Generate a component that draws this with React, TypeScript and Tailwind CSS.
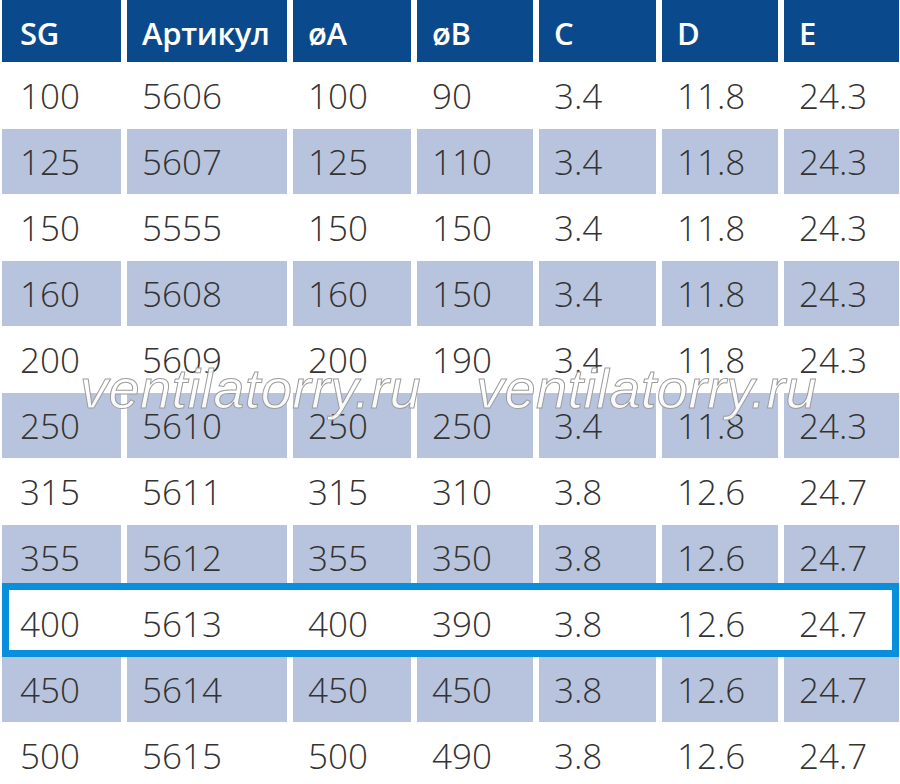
import React from 'react';

const headers = ['SG', 'Артикул', 'øA', 'øB', 'C', 'D', 'E'];

const rows: string[][] = [
  ['100', '5606', '100', '90', '3.4', '11.8', '24.3'],
  ['125', '5607', '125', '110', '3.4', '11.8', '24.3'],
  ['150', '5555', '150', '150', '3.4', '11.8', '24.3'],
  ['160', '5608', '160', '150', '3.4', '11.8', '24.3'],
  ['200', '5609', '200', '190', '3.4', '11.8', '24.3'],
  ['250', '5610', '250', '250', '3.4', '11.8', '24.3'],
  ['315', '5611', '315', '310', '3.8', '12.6', '24.7'],
  ['355', '5612', '355', '350', '3.8', '12.6', '24.7'],
  ['400', '5613', '400', '390', '3.8', '12.6', '24.7'],
  ['450', '5614', '450', '450', '3.8', '12.6', '24.7'],
  ['500', '5615', '500', '490', '3.8', '12.6', '24.7'],
];

// column widths, left padding of the text
const cols = [
  'w-[119px] pl-[18px]',
  'w-[160px] pl-[15px]',
  'w-[118px] pl-[15px]',
  'w-[116px] pl-[15px]',
  'w-[117px] pl-[15px]',
  'w-[116px] pl-[15px]',
  'w-[115px] pl-[15px]',
];

const HIGHLIGHT = 8;

const Watermark: React.FC<{ left: string }> = ({ left }) => (
  <div
    className={`pointer-events-none absolute top-[361px] ${left} text-[56px] leading-none italic tracking-[0.4px] text-white/90 [-webkit-text-stroke:1px_#9c9c9c]`}
    style={{ fontFamily: '"Liberation Sans", Arial, sans-serif' }}
  >
    ventilatorry.ru
  </div>
);

export default function App() {
  return (
    <div
      className="relative h-[784px] w-[900px] overflow-hidden bg-white"
      style={{ fontFamily: '"Open Sans", "Noto Sans", sans-serif' }}
    >
      <div className="flex flex-col gap-[1px] pl-[2px]">
        <div className="flex h-[62px] gap-[6px]">
          {headers.map((h, i) => (
            <div
              key={h}
              className={`${cols[i]} flex items-center pt-[5px] bg-[#0a4a8c] text-[31px] font-semibold tracking-[-0.3px] text-white`}
            >
              {h}
            </div>
          ))}
        </div>

        {rows.map((r, ri) => {
          const shaded = ri % 2 === 1;
          return (
            <div key={r[1]} className="relative flex h-[65px] gap-[6px]">
              {r.map((v, ci) => (
                <div
                  key={ci}
                  className={`${cols[ci]} flex items-center pt-[2px] text-[35px] font-light text-[#333] ${
                    shaded ? 'bg-[#b8c4dd]' : 'bg-white'
                  }`}
                >
                  {v}
                </div>
              ))}
              {ri === HIGHLIGHT && (
                <div className="pointer-events-none absolute -top-[8px] -bottom-[1px] left-0 right-[1px] border-[7px] border-[#0a8fdc]" />
              )}
            </div>
          );
        })}
      </div>

      <Watermark left="left-[80px]" />
      <Watermark left="left-[476px]" />
    </div>
  );
}
